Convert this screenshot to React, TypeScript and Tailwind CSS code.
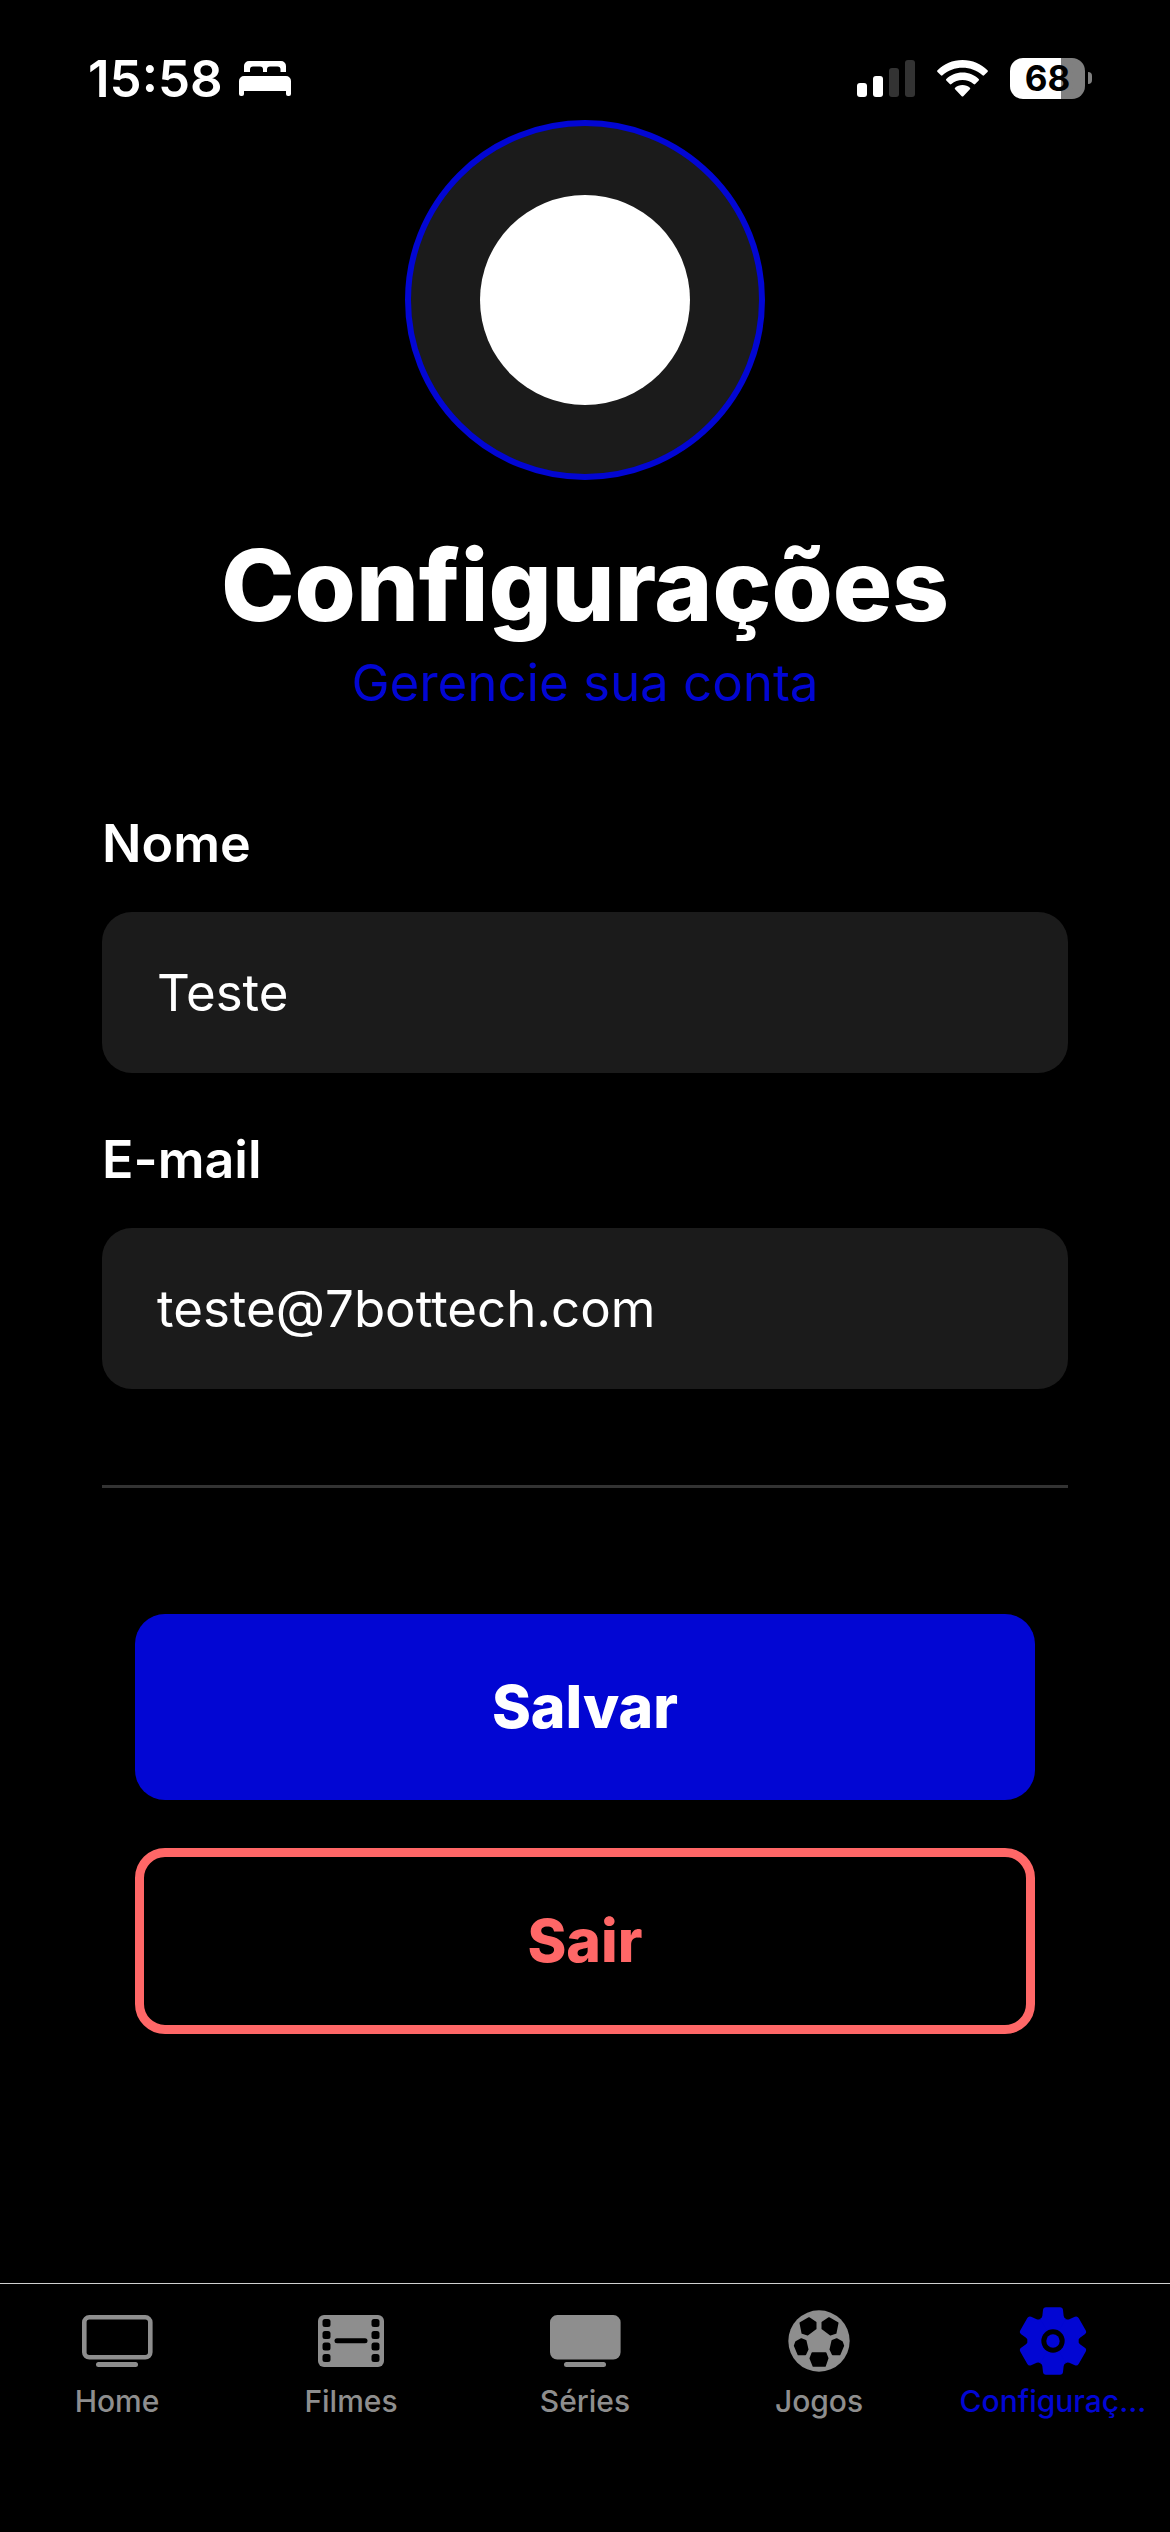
import { useState } from "react";
import type { ReactNode } from "react";

const BedIcon = () => (
	<svg viewBox="0 0 52 36" className="h-9 w-[52px]" fill="currentColor" aria-hidden="true">
		<path d="M5 12V6a5 5 0 0 1 5-5h32a5 5 0 0 1 5 5v6h-5.500V9.500a3 3 0 0 0-3-3H31a3 3 0 0 0-3 3V12h-4V9.500a3 3 0 0 0-3-3H14a3 3 0 0 0-3 3V12Z" />
		<path d="M0 34V21a5 5 0 0 1 5-5h42a5 5 0 0 1 5 5v13a2 2 0 0 1-2 2h-1a2 2 0 0 1-2-2v-3H5v3a2 2 0 0 1-2 2H2a2 2 0 0 1-2-2Z" />
	</svg>
);

const SignalIcon = () => (
	<svg viewBox="0 0 58 38" className="h-[38px] w-[58px]" fill="#ffffff" aria-hidden="true">
		<rect x="0" y="24" width="10" height="14" rx="3" />
		<rect x="16" y="17" width="10" height="21" rx="3" />
		<rect x="32" y="9" width="10" height="29" rx="3" fill="#333333" />
		<rect x="48" y="1" width="10" height="37" rx="3" fill="#333333" />
	</svg>
);

const WifiIcon = () => (
	<svg viewBox="0 0 51 38" className="h-[38px] w-[51px]" fill="currentColor" aria-hidden="true">
		<path d="M25.500 1C35.500 1 44 5 50.500 11.300q.8.800 0 1.600l-3.400 3.400q-.8.800-1.600 0C40 11.300 33 8.700 25.500 8.700S11 11.300 5.500 16.300q-.8.800-1.600 0L.5 12.900q-.8-.8 0-1.600C7 5 15.500 1 25.500 1Z" />
		<path d="M25.500 13.600c6.400 0 12 2.500 16.200 6.400q.8.800 0 1.600l-3.500 3.500q-.7.700-1.600 0c-3-2.600-6.800-4.100-11.100-4.100s-8.100 1.500-11.100 4.100q-.9.700-1.600 0l-3.500-3.500q-.8-.8 0-1.600c4.200-3.900 9.800-6.400 16.200-6.400Z" />
		<path d="M25.500 26c2.900 0 5.400 1 7.400 2.700q.8.800 0 1.600l-6.600 6.900q-.8.800-1.600 0l-6.600-6.900q-.8-.8 0-1.600c2-1.700 4.500-2.700 7.400-2.700Z" />
	</svg>
);

const TvIcon = ({ filled = false }: { filled?: boolean }) => (
	<svg viewBox="0 0 72 72" className="size-[72px]" aria-hidden="true">
		<rect
			x="3.300"
			y="12.300"
			width="66"
			height="40"
			rx="5"
			fill={filled ? "currentColor" : "none"}
			stroke="currentColor"
			strokeWidth="4.600"
		/>
		<rect x="15" y="57" width="42" height="5" rx="2.500" fill="currentColor" />
	</svg>
);

const FilmIcon = () => (
	<svg viewBox="0 0 72 72" className="size-[72px]" aria-hidden="true">
		<rect x="3" y="10" width="66" height="52" rx="6" fill="currentColor" />
		{[14, 26, 37.5, 49].map((y) => (
			<g key={y} fill="#000000">
				<rect x="7.500" y={y} width="8" height="8" rx="2.500" />
				<rect x="56.500" y={y} width="8" height="8" rx="2.500" />
			</g>
		))}
		<rect x="19.500" y="33.300" width="33" height="5" rx="2.500" fill="#000000" />
	</svg>
);

const BallIcon = () => (
	<svg viewBox="-108 -108 216 216" className="size-[72px]" aria-hidden="true">
		<circle r="92" fill="currentColor" />
		<g fill="#000000" stroke="#000000" strokeWidth="5" strokeLinejoin="round">
			<path d="M-56-54-30-69-10-56V-37L-34-19-50-24Z" />
			<path d="M56-54 30-69 10-56V-37L34-19 50-24Z" />
			<path d="M-73 14-69 3-53-6-40-1-34 25-41 40H-62Z" />
			<path d="M73 14 69 3 53-6 40-1 34 25 41 40H62Z" />
			<path d="M-20 36H20L26 52 18 75H-17L-26 52Z" />
		</g>
	</svg>
);

const GearIcon = () => (
	<svg viewBox="-108 -108 216 216" className="size-[72px]" aria-hidden="true">
		<g fill="currentColor">
			<circle r="75" />
			{[0, 60, 120, 180, 240, 300].map((angle) => (
				<path
					key={angle}
					transform={`rotate(${angle})`}
					d="M-38.500-66.700Q-33-68-32-75L-30-93Q-29-101-21-101H21Q29-101 30-93L32-75Q33-68 38.500-66.700L0 0Z"
				/>
			))}
		</g>
		<circle r="35" fill="#000000" />
		<circle r="20" fill="currentColor" />
	</svg>
);

const tabs: { label: string; icon: ReactNode; active?: boolean }[] = [
	{ label: "Home", icon: <TvIcon /> },
	{ label: "Filmes", icon: <FilmIcon /> },
	{ label: "Séries", icon: <TvIcon filled /> },
	{ label: "Jogos", icon: <BallIcon /> },
	{ label: "Configuraç...", icon: <GearIcon />, active: true },
];

function StatusBar() {
	return (
		<div className="flex h-[120px] items-center justify-between pl-[88px] pr-[78px] pt-9">
			<div className="flex items-center gap-4">
				<span className="text-[51px] font-semibold leading-none">15:58</span>
				<BedIcon />
			</div>
			<div className="flex items-center gap-[22px]">
				<SignalIcon />
				<WifiIcon />
				<div className="flex items-center gap-[3px]">
					<div className="flex h-[41px] w-[75px] items-center justify-center rounded-[13px] bg-linear-to-r from-white from-68% to-[#808080] to-68% text-[35px] font-bold leading-none text-black">
						68
					</div>
					<div className="h-3 w-1 rounded-r-full bg-[#808080]" />
				</div>
			</div>
		</div>
	);
}

type FieldProps = {
	id: string;
	label: string;
	type: string;
	value: string;
	onChange: (value: string) => void;
};

function Field({ id, label, type, value, onChange }: FieldProps) {
	return (
		<div className="flex flex-col gap-9">
			<label htmlFor={id} className="text-[52px] font-semibold leading-[64px]">
				{label}
			</label>
			<input
				id={id}
				type={type}
				value={value}
				onChange={(e) => onChange(e.target.value)}
				className="h-[161px] w-full rounded-[30px] bg-[#1b1b1b] px-[55px] text-[51px] text-white outline-none"
			/>
		</div>
	);
}

export default function App() {
	const [name, setName] = useState("Teste");
	const [email, setEmail] = useState("teste@7bottech.com");

	return (
		<div className="flex min-h-screen flex-col bg-black font-['Inter',sans-serif] text-white">
			<StatusBar />

			<main className="flex flex-col px-[102px]">
				<div className="mx-auto flex size-[360px] items-center justify-center rounded-full border-6 border-[#0206d3] bg-[#1b1b1b]">
					<div className="size-[210px] rounded-full bg-white" />
				</div>

				<h1 className="mt-[43px] text-center text-[99px] font-extrabold leading-[124px]">
					Configurações
				</h1>
				<p className="text-center text-[51px] leading-[72px] text-[#0206d3]">
					Gerencie sua conta
				</p>

				<form className="mt-[93px] flex flex-col" onSubmit={(e) => e.preventDefault()}>
					<div className="flex flex-col gap-[55px]">
						<Field id="name" label="Nome" type="text" value={name} onChange={setName} />
						<Field id="email" label="E-mail" type="email" value={email} onChange={setEmail} />
					</div>

					<hr className="mt-24 border-t-3 border-[#333333]" />

					<div className="mt-[126px] flex flex-col gap-12 px-[33px]">
						<button
							type="submit"
							className="h-[186px] rounded-[30px] bg-[#0206d3] text-[59px] font-extrabold"
						>
							Salvar
						</button>
						<button
							type="button"
							className="h-[186px] rounded-[30px] border-9 border-[#ff6767] text-[59px] font-extrabold text-[#ff6767]"
						>
							Sair
						</button>
					</div>
				</form>
			</main>

			<nav className="mt-auto grid h-[249px] grid-cols-5 border-t border-[#d0d0d0] pt-[21px]">
				{tabs.map(({ label, icon, active }) => (
					<a
						key={label}
						href="#"
						aria-current={active ? "page" : undefined}
						className={`flex flex-col items-center gap-1.5 ${active ? "text-[#0206d3]" : "text-[#8e8e8e]"}`}
					>
						{icon}
						<span className="text-[30px] font-medium leading-[36px]">{label}</span>
					</a>
				))}
			</nav>
		</div>
	);
}
